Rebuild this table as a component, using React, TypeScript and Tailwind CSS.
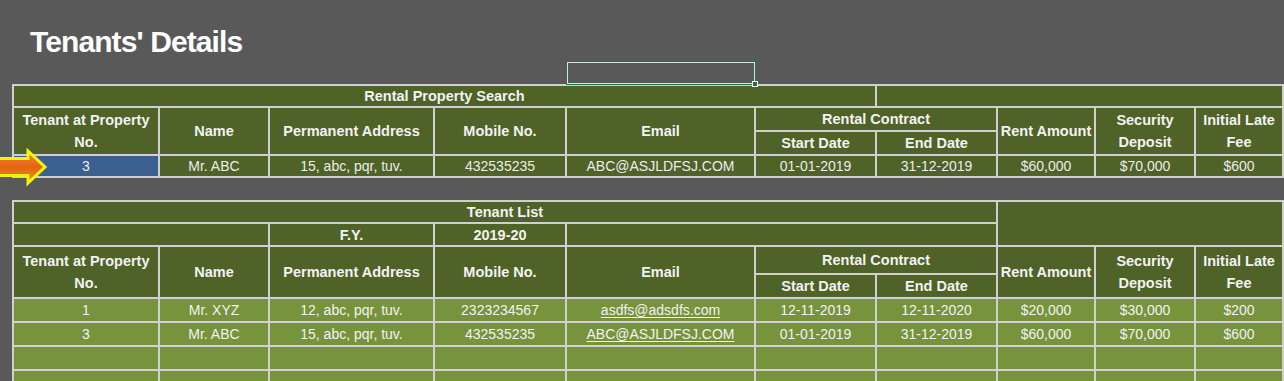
import React from 'react';

const head = 'bg-[#4f6228] text-[#f2f2f2] font-bold text-[14.5px] leading-[22px] flex items-center justify-center text-center';
const cellDark = 'bg-[#4f6228] text-[#ececec] text-[14px] flex items-center justify-center';
const cellLight = 'bg-[#77933c] text-[#f2f2f2] text-[14px] flex items-center justify-center';

const cols = 'grid-cols-[144px_108px_163px_130px_187px_119px_119px_96px_98px_86px]';

type Tenant = {
  no: string;
  name: string;
  address: string;
  mobile: string;
  email: string;
  start: string;
  end: string;
  rent: string;
  deposit: string;
  fee: string;
};

const tenants: Tenant[] = [
  { no: '1', name: 'Mr. XYZ', address: '12, abc, pqr, tuv.', mobile: '2323234567', email: 'asdfs@adsdfs.com', start: '12-11-2019', end: '12-11-2020', rent: '$20,000', deposit: '$30,000', fee: '$200' },
  { no: '3', name: 'Mr. ABC', address: '15, abc, pqr, tuv.', mobile: '432535235', email: 'ABC@ASJLDFSJ.COM', start: '01-01-2019', end: '31-12-2019', rent: '$60,000', deposit: '$70,000', fee: '$600' },
];

// header cells shared by both tables
const HeaderCells: React.FC = () => (
  <>
    <div className={`${head} row-span-2`}>Tenant at Property<br />No.</div>
    <div className={`${head} row-span-2`}>Name</div>
    <div className={`${head} row-span-2`}>Permanent Address</div>
    <div className={`${head} row-span-2`}>Mobile No.</div>
    <div className={`${head} row-span-2`}>Email</div>
    <div className={`${head} col-span-2`}>Rental Contract</div>
    <div className={`${head} row-span-2`}>Rent Amount</div>
    <div className={`${head} row-span-2`}>Security<br />Deposit</div>
    <div className={`${head} row-span-2`}>Initial Late<br />Fee</div>
    <div className={head}>Start Date</div>
    <div className={head}>End Date</div>
  </>
);

const Arrow: React.FC = () => (
  <svg className="absolute left-0 top-[148px]" width="50" height="40" viewBox="0 0 50 40">
    <defs>
      <linearGradient id="arrowFill" x1="0" y1="0" x2="0" y2="1">
        <stop offset="0" stopColor="#f0873a" />
        <stop offset="0.5" stopColor="#e4640f" />
        <stop offset="1" stopColor="#f0873a" />
      </linearGradient>
    </defs>
    <polygon
      points="-4,10.5 28,10.5 28,3 45,19 28,35 28,27.5 -4,27.5"
      fill="url(#arrowFill)"
      stroke="#f4f40a"
      strokeWidth="3"
      strokeLinejoin="miter"
    />
  </svg>
);

export default function App() {
  const searched = tenants[1];

  return (
    <div className="relative w-[1284px] h-[381px] overflow-hidden bg-[#595959] font-['Liberation_Sans',Arial,sans-serif]">
      <h1 className="pt-[27px] pl-[30px] text-[30px] leading-[30px] font-bold text-white tracking-[-0.9px]">
        Tenants' Details
      </h1>

      {/* selected cell in the sheet */}
      <div className="relative mt-[5px] ml-[567px] w-[188px] h-[22px] border border-[#d6e8dc] outline outline-1 outline-[#217346]">
        <div className="absolute right-[-4px] bottom-[-4px] w-[6px] h-[6px] bg-[#217346] border border-white" />
      </div>

      {/* Rental Property Search */}
      <div className={`ml-[12px] w-[1272px] bg-[#d0d0d0] p-[2px] grid gap-[2px] ${cols} grid-rows-[20px_22px_22px_20px]`}>
        <div className={`${head} col-span-6`}>Rental Property Search</div>
        <div className={`${head} col-span-4`} />
        <HeaderCells />
        <div className="bg-[#3b5f8f] text-[#ececec] text-[14px] flex items-center justify-center">{searched.no}</div>
        <div className={cellDark}>{searched.name}</div>
        <div className={cellDark}>{searched.address}</div>
        <div className={cellDark}>{searched.mobile}</div>
        <div className={cellDark}>{searched.email}</div>
        <div className={cellDark}>{searched.start}</div>
        <div className={cellDark}>{searched.end}</div>
        <div className={cellDark}>{searched.rent}</div>
        <div className={cellDark}>{searched.deposit}</div>
        <div className={cellDark}>{searched.fee}</div>
      </div>

      {/* Tenant List */}
      <div className={`mt-[22px] ml-[12px] w-[1272px] bg-[#d0d0d0] p-[2px] grid gap-[2px] ${cols} grid-rows-[20px_21px_26px_22px_22px_22px_22px_22px]`}>
        <div className={`${head} col-span-7`}>Tenant List</div>
        <div className={`${head} col-span-3 row-span-2`} />
        <div className={`${head} col-span-2`} />
        <div className={head}>F.Y.</div>
        <div className={head}>2019-20</div>
        <div className={`${head} col-span-3`} />
        <HeaderCells />
        {tenants.map((t) => (
          <React.Fragment key={t.no}>
            <div className={cellLight}>{t.no}</div>
            <div className={cellLight}>{t.name}</div>
            <div className={cellLight}>{t.address}</div>
            <div className={cellLight}>{t.mobile}</div>
            <div className={cellLight}><span className="underline underline-offset-2">{t.email}</span></div>
            <div className={cellLight}>{t.start}</div>
            <div className={cellLight}>{t.end}</div>
            <div className={cellLight}>{t.rent}</div>
            <div className={cellLight}>{t.deposit}</div>
            <div className={cellLight}>{t.fee}</div>
          </React.Fragment>
        ))}
        {Array.from({ length: 20 }).map((_, i) => (
          <div key={i} className="bg-[#77933c]" />
        ))}
      </div>

      <Arrow />
    </div>
  );
}
